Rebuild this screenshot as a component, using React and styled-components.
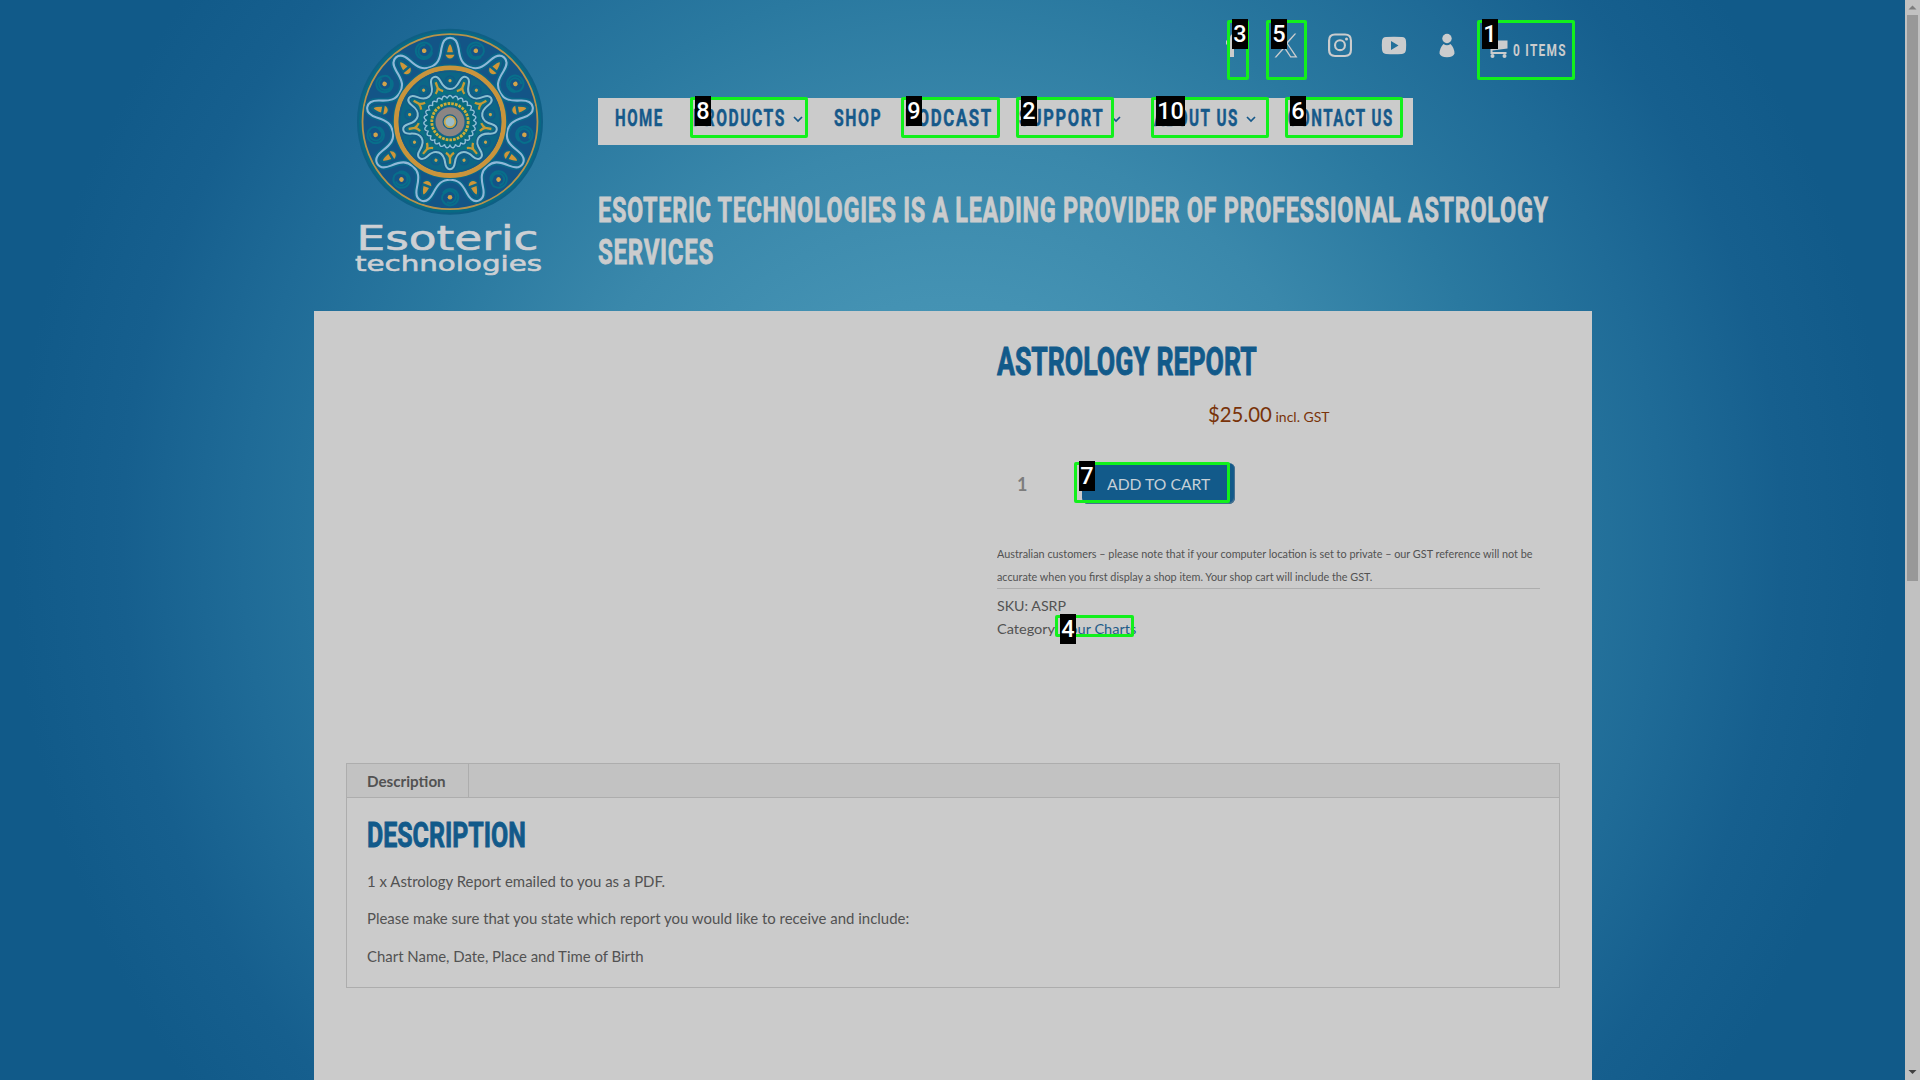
import React, { useLayoutEffect, useRef, useState } from 'react';
import styled, { createGlobalStyle } from 'styled-components';

const Global = createGlobalStyle`
  * { box-sizing: border-box; }
  html, body { margin: 0; padding: 0; overflow: hidden; }
  body { font-family: Lato, sans-serif; color: #525252; }
  h1, h2, p { margin: 0; font-weight: 400; }
`;

const BLUE = '#125a8a';
const PALE = '#cbcccd';

const Screen = styled.div`
  position: relative;
  display: flex;
  width: 1920px;
  height: 1080px;
  overflow: hidden;
`;

const Page = styled.div`
  width: 1905px;
  height: 1080px;
  background: radial-gradient(circle at 952px 540px,
    #4c9dbd 0, #4492b3 240px, #3a88ab 400px, #2a79a0 560px, #1f6b97 710px, #165f8e 830px, #115a89 940px);
`;

const FitBox = styled.span`
  display: inline-block;
  width: ${(p) => p.$w}px;
  white-space: nowrap;
  vertical-align: top;
`;
const FitInner = styled.span`
  display: inline-block;
  transform-origin: 0 50%;
`;

function Fit({ w, children }) {
  const ref = useRef(null);
  const [scale, setScale] = useState(1);
  useLayoutEffect(() => {
    setScale(w / ref.current.offsetWidth);
  }, [w]);
  return (
    <FitBox $w={w}>
      <FitInner ref={ref} style={{ transform: `scaleX(${scale})` }}>{children}</FitInner>
    </FitBox>
  );
}

const Header = styled.header`
  display: flex;
  height: 311px;
  padding-left: 340px;
`;
const LogoColumn = styled.div`
  width: 258px;
  padding-top: 20px;
`;
const HeaderMain = styled.div`
  width: 994px;
`;
const TopBar = styled.div`
  display: flex;
  height: 98px;
  padding: 32px 0 0 626px;
  color: ${PALE};
`;
const SocialIcon = styled.svg`
  display: block;
  flex: none;
  width: 28px;
  height: 28px;
  margin-right: ${(p) => p.$gap}px;
  fill: ${PALE};
`;
const CartLabel = styled.div`
  font: 700 16.5px/24px Roboto, sans-serif;
  letter-spacing: 1.8px;
  padding-top: 6.5px;
`;
const Nav = styled.nav`
  display: grid;
  grid-template-columns: 78px 141px 71px 114px 135px 134px 1fr;
  width: 815px;
  height: 47px;
  padding-left: 17px;
  background: #cbcbcb;
`;
const NavItem = styled.a`
  display: flex;
  align-items: flex-start;
  color: #16598a;
  font: 700 24px/40px Roboto, sans-serif;
  letter-spacing: 2.4px;
  -webkit-text-stroke: 0.5px #16598a;
`;
const Chevron = styled.svg`
  width: 10px;
  height: 8px;
  margin: 17px 0 0 ${(p) => p.$gap}px;
  fill: none;
  stroke: #16598a;
  stroke-width: 1.7;
`;
const Tagline = styled.h1`
  display: flex;
  flex-direction: column;
  padding-top: 44px;
  color: ${PALE};
  font: 700 34.7px/42px Roboto, sans-serif;
  letter-spacing: 1px;
  -webkit-text-stroke: 0.8px ${PALE};
`;

const Content = styled.main`
  width: 1278px;
  height: 769px;
  margin-left: 314px;
  padding: 0 32px;
  background: #cbcbcb;
`;
const Product = styled.section`
  height: 452px;
  padding: 27px 20px 0 651px;
`;
const Title = styled.h1`
  height: 50px;
  color: ${BLUE};
  font: 700 38px/48px Roboto, sans-serif;
  -webkit-text-stroke: 0.9px ${BLUE};
`;
const Price = styled.p`
  display: flex;
  justify-content: center;
  gap: 4px;
  height: 50px;
  color: #793309;
  font-size: 21px;
  line-height: 52px;
`;
const TaxNote = styled.span`
  font-size: 14px;
  line-height: 57px;
`;
const CartForm = styled.div`
  display: flex;
  height: 41px;
  margin-top: 25px;
`;
const Quantity = styled.span`
  width: 85px;
  padding-left: 20px;
  color: #7d7d7d;
  font-size: 18px;
  font-weight: 700;
  line-height: 42px;
`;
const AddButton = styled.button`
  width: 153px;
  height: 41px;
  padding: 0 0 0 25px;
  border: 0;
  border-radius: 6px;
  background: ${BLUE};
  box-shadow: inset -1px -1px 1px #4c7492;
  color: #c6d0d7;
  font: 400 16px/42px Lato, sans-serif;
  text-align: left;
`;
const FinePrint = styled.p`
  display: flex;
  flex-direction: column;
  height: 85px;
  padding-top: 38px;
  border-bottom: 1px solid #adadad;
  font-size: 11.3px;
  line-height: 23px;
`;
const Meta = styled.p`
  font-size: 14px;
  line-height: 23px;
  padding-top: ${(p) => p.$top || 0}px;
`;
const CategoryLink = styled.a`
  color: #1f5c88;
`;

const Tabs = styled.section`
  width: 1214px;
  height: 225px;
  border: 1px solid #adadad;
`;
const TabBar = styled.div`
  display: flex;
  height: 34px;
  background: #c2c2c2;
  border-bottom: 1px solid #adadad;
`;
const Tab = styled.div`
  width: 122px;
  padding-left: 20px;
  border-right: 1px solid #adadad;
  font-size: 15px;
  font-weight: 700;
  line-height: 34px;
`;
const Panel = styled.div`
  padding: 14px 20px 0;
`;
const PanelTitle = styled.h2`
  height: 56px;
  color: ${BLUE};
  font: 700 35px/48px Roboto, sans-serif;
  -webkit-text-stroke: 0.9px ${BLUE};
`;
const Paragraph = styled.p`
  height: 37.4px;
  font-size: 15.3px;
  line-height: 26px;
`;

const ScrollTrack = styled.div`
  display: flex;
  flex-direction: column;
  align-items: center;
  justify-content: space-between;
  width: 15px;
  height: 1080px;
  background: #c1c1c1;
`;
const ScrollThumb = styled.div`
  width: 11px;
  height: 566px;
  margin-bottom: auto;
  background: #989898;
`;
const ScrollArrow = styled.svg`
  display: block;
  width: 15px;
  height: 15px;
  fill: ${(p) => p.$color};
`;

const Marker = styled.div`
  position: absolute;
  left: ${(p) => p.$x}px;
  top: ${(p) => p.$y}px;
  width: ${(p) => p.$w}px;
  height: ${(p) => p.$h}px;
  border: 3px solid #12f01c;
  border-radius: 2px;
`;
const MarkerLabel = styled.span`
  position: absolute;
  left: 2px;
  top: -4px;
  width: ${(p) => (p.$wide ? 29 : 16)}px;
  height: 30px;
  background: #000;
  color: #fff;
  font: 500 23.5px/31px Roboto, sans-serif;
  text-align: center;
`;

const rotated = (x, y, deg) => {
  const a = (deg * Math.PI) / 180;
  return `${(x * Math.cos(a) - y * Math.sin(a)).toFixed(2)} ${(x * Math.sin(a) + y * Math.cos(a)).toFixed(2)}`;
};

// Nine rounded lobes joined by wide shallow valleys.
const LOBE = [[5.2, -84], [7.6, -80], [8.6, -73], [10, -62], [12.5, -57.2], [19.8, -54.5]];
const lobedPath = () => {
  let d = 'M0 -84';
  for (let i = 0; i < 9; i += 1) {
    const deg = i * 40;
    const out = LOBE.map(([x, y]) => rotated(x, y, deg));
    const back = [[-12.5, -57.2], [-10, -62], [-8.6, -73], [-7.6, -80], [-5.2, -84], [0, -84]].map(([x, y]) => rotated(x, y, deg + 40));
    d += `C${out.slice(0, 3).join(' ')}C${out.slice(3).join(' ')}C${back.slice(0, 3).join(' ')}C${back.slice(3).join(' ')}`;
  }
  return `${d}Z`;
};
const LOBES = lobedPath();

const scallops = (r, depth, n) => {
  let d = '';
  for (let i = 0; i < 360; i += 1) {
    const a = (i * Math.PI) / 180;
    const q = r + depth * Math.abs(Math.cos((n * a) / 2));
    d += `${i ? 'L' : 'M'}${(q * Math.sin(a)).toFixed(2)} ${(-q * Math.cos(a)).toFixed(2)}`;
  }
  return `${d}Z`;
};
const NINE = Array.from({ length: 9 }, (_, i) => i * 40);

const LogoSvg = styled.svg`
  display: block;
  width: 220px;
  height: 260px;
`;

function Logo() {
  return (
    <LogoSvg viewBox="0 0 220 260">
      <g transform="translate(110 101.7)">
        <circle r="93" fill="#0f5f84" />
        <circle r="91" fill="#086a84" />
        <circle r="87.5" fill="#135587" stroke="#b8934a" strokeWidth="1.8" />
        <path d={LOBES} fill="none" stroke="#0a678a" strokeWidth="5.500" />
        <path d={LOBES} fill="none" stroke="#8fb8d8" strokeWidth="2.100" />
        {NINE.map((a) => (
          <g key={a}>
            <g transform={`rotate(${a})`}>
              <path d="M-5-66C-4.500-76-2-80 0-81C2-80 4.500-76 5-66C4-60.500-4-60.500-5-66Z" fill="#0d6686" />
              <path d="M-2.900-69.500Q-1.800-76 0-77.500Q1.800-76 2.900-69.500ZM-4.500-67H4.500Q3-63.300 0-63.300Q-3-63.300-4.500-67Z" fill="#cf9638" />
            </g>
            <g transform={`rotate(${a + 20}) translate(0 -75.500)`}>
              <path d="M7 4A8.200 8.200 0 1 1 7-4A6 6 0 0 1 4 5A6 6 0 1 1 3-5" fill="none" stroke="#086f8b" strokeWidth="2" />
              <circle r="2.300" fill="#d2a34b" />
            </g>
          </g>
        ))}
        <circle r="57.500" fill="#0a6987" />
        <circle r="53.800" fill="#0b6985" stroke="#c9943c" strokeWidth="4.800" />
        <circle r="50.500" fill="#0c6686" stroke="#155a86" strokeWidth="1.500" />
        <g transform="rotate(20) scale(0.565)">
          <path d={LOBES} fill="#0a7083" stroke="#125a87" strokeWidth="8" />
          <path d={LOBES} fill="none" stroke="#8abfd0" strokeWidth="3.600" />
        </g>
        {NINE.map((a) => (
          <g key={a}>
            <g transform={`rotate(${a}) translate(0 -41)`}>
              <circle r="4.600" fill="none" stroke="#125a88" strokeWidth="1.500" />
              <circle r="1.600" fill="#cba34d" />
            </g>
            <path transform={`rotate(${a + 20})`} d="M0-42V-36Q-1-33-4-31M0-36Q1-33 4-31" fill="none" stroke="#c69a35" strokeWidth="2.300" />
          </g>
        ))}
        <circle r="27.500" fill="#12608a" />
        <path d={scallops(23.6, 2.6, 27)} fill="#08697f" stroke="#8fbfd5" strokeWidth="1.400" />
        <circle r="21" fill="#086d78" />
        <circle r="18.200" fill="none" stroke="#cfab38" strokeWidth="2.800" strokeDasharray="2.7 1.06" />
        <circle r="15.800" fill="#15618d" />
        <circle r="11" fill="#145f8b" stroke="#8b8583" strokeWidth="7" />
        <circle r="5.400" fill="#9cbdc7" stroke="#c7a64a" strokeWidth="1.800" />
      </g>
      <g fill="#cdd0d4" stroke="#cdd0d4" strokeWidth="0.6" fontFamily="DejaVu Sans, sans-serif">
        <text x="16.500" y="230" fontSize="33" textLength="182" lengthAdjust="spacingAndGlyphs">Esoteric</text>
        <text x="15" y="250.500" fontSize="22" textLength="187" lengthAdjust="spacingAndGlyphs">technologies</text>
      </g>
    </LogoSvg>
  );
}

const NAV = [
  { text: 'HOME', w: 49 },
  { text: 'PRODUCTS', w: 93, gap: 7 },
  { text: 'SHOP', w: 48 },
  { text: 'PODCAST', w: 88 },
  { text: 'SUPPORT', w: 85, gap: 7 },
  { text: 'ABOUT US', w: 85, gap: 7 },
  { text: 'CONTACT US', w: 106 },
];

const MARKERS = [
  [1, 1477, 20, 98, 60], [2, 1016, 97, 98, 41], [3, 1227, 20, 22, 60], [4, 1055, 615, 79, 22],
  [5, 1266, 20, 41, 60], [6, 1285, 97, 118, 41], [7, 1074, 462, 156, 41], [8, 690, 97, 118, 41],
  [9, 901, 97, 99, 41], [10, 1151, 97, 118, 41],
];

export default function App() {
  return (
    <Screen>
      <Global />
      <Page>
        <Header>
          <LogoColumn><Logo /></LogoColumn>
          <HeaderMain>
            <TopBar>
              <SocialIcon viewBox="0 0 28 28" $gap={21}>
                <path d="M6 25V12.5H2V8.500H6V6Q6 1.500 11 1.500H14V5.500H12Q10 5.500 10 7V8.500H14L13.500 12.500H10V25Z" />
              </SocialIcon>
              <SocialIcon viewBox="0 0 28 28" $gap={26}>
                <path fillRule="evenodd" d="M1.500 1.500H8.500L14 9.700L21.600 1.500H23.300L14.800 11.200L24.500 25.500H17.300L11.300 16.600L3.300 25.500H1.500L10.500 15.200ZM4 2.800L18 24.200H22L7.800 2.800Z" />
              </SocialIcon>
              <SocialIcon viewBox="0 0 28 28" $gap={26}>
                <path fillRule="evenodd" d="M8 1.500H18Q25 1.500 25 8.500V18Q25 25 18 25H8Q1 25 1 18V8.500Q1 1.500 8 1.500ZM8 3.600Q3.200 3.600 3.200 8.500V18Q3.200 22.900 8 22.900H18Q22.900 22.900 22.900 18V8.500Q22.900 3.600 18 3.600ZM13 7.200A6 6 0 1 1 13 19.200A6 6 0 1 1 13 7.200M13 9.300A3.900 3.900 0 1 0 13 17.100A3.900 3.900 0 1 0 13 9.300" />
                <circle cx="19.500" cy="6.900" r="1.500" />
              </SocialIcon>
              <SocialIcon viewBox="0 0 28 28" $gap={25}>
                <path fillRule="evenodd" d="M5 5Q13 4.400 21 5Q24.700 5.200 25 9Q25.400 13.300 25 17.500Q24.700 21.700 21 22Q13 22.600 5 22Q1.300 21.700 1 17.500Q.6 13.300 1 9Q1.300 5.200 5 5ZM10 9V18L17.500 13.500Z" />
              </SocialIcon>
              <SocialIcon viewBox="0 0 28 28" $gap={23}>
                <circle cx="13" cy="6.500" r="4.700" />
                <path d="M9.500 12Q13 14.500 16.500 12Q20.500 16 20.500 21.500Q19.500 25 13 25.200Q6.500 25 5.500 21.500Q5.500 16 9.500 12Z" />
              </SocialIcon>
              <SocialIcon viewBox="0 0 28 28" $gap={0}>
                <path d="M1 6H5L6.500 8.500H22.500V16.500L7.500 18.500V20H21.500V22H5.500V17L3.500 8H1Z" />
                <circle cx="7.500" cy="24" r="2" /><circle cx="19.500" cy="24" r="2" />
              </SocialIcon>
              <CartLabel><Fit w={54}>0 ITEMS</Fit></CartLabel>
            </TopBar>
            <Nav>
              {NAV.map((n) => (
                <NavItem key={n.text}>
                  <Fit w={n.w}>{n.text}</Fit>
                  {n.gap && <Chevron viewBox="0 0 10 8" $gap={n.gap}><path d="M1 2L5 6L9 2" /></Chevron>}
                </NavItem>
              ))}
            </Nav>
            <Tagline>
              <Fit w={951}>ESOTERIC TECHNOLOGIES IS A LEADING PROVIDER OF PROFESSIONAL ASTROLOGY</Fit>
              <Fit w={116}>SERVICES</Fit>
            </Tagline>
          </HeaderMain>
        </Header>
        <Content>
          <Product>
            <Title><Fit w={260}>ASTROLOGY REPORT</Fit></Title>
            <Price><Fit w={64}>$25.00</Fit><TaxNote><Fit w={54}>incl. GST</Fit></TaxNote></Price>
            <CartForm>
              <Quantity>1</Quantity>
              <AddButton><Fit w={103}>ADD TO CART</Fit></AddButton>
            </CartForm>
            <FinePrint>
              <Fit w={536}>Australian customers – please note that if your computer location is set to private – our GST reference will not be</Fit>
              <Fit w={375}>accurate when you first display a shop item. Your shop cart will include the GST.</Fit>
            </FinePrint>
            <Meta $top={5}><Fit w={69}>SKU: ASRP</Fit></Meta>
            <Meta><Fit w={139}>Category: <CategoryLink>Your Charts</CategoryLink></Fit></Meta>
          </Product>
          <Tabs>
            <TabBar><Tab><Fit w={79}>Description</Fit></Tab></TabBar>
            <Panel>
              <PanelTitle><Fit w={159}>DESCRIPTION</Fit></PanelTitle>
              <Paragraph><Fit w={298}>1 x Astrology Report emailed to you as a PDF.</Fit></Paragraph>
              <Paragraph><Fit w={542}>Please make sure that you state which report you would like to receive and include:</Fit></Paragraph>
              <Paragraph><Fit w={277}>Chart Name, Date, Place and Time of Birth</Fit></Paragraph>
            </Panel>
          </Tabs>
        </Content>
      </Page>
      <ScrollTrack>
        <ScrollArrow viewBox="0 0 15 15" $color="#7d7d7d"><path d="M7.500 5.500L11.500 9.500H3.500Z" /></ScrollArrow>
        <ScrollThumb />
        <ScrollArrow viewBox="0 0 15 15" $color="#404040"><path d="M3.500 5H11.500L7.500 9Z" /></ScrollArrow>
      </ScrollTrack>
      {MARKERS.map(([n, x, y, w, h]) => (
        <Marker key={n} $x={x} $y={y} $w={w} $h={h}>
          <MarkerLabel $wide={n > 9}>{n}</MarkerLabel>
        </Marker>
      ))}
    </Screen>
  );
}
